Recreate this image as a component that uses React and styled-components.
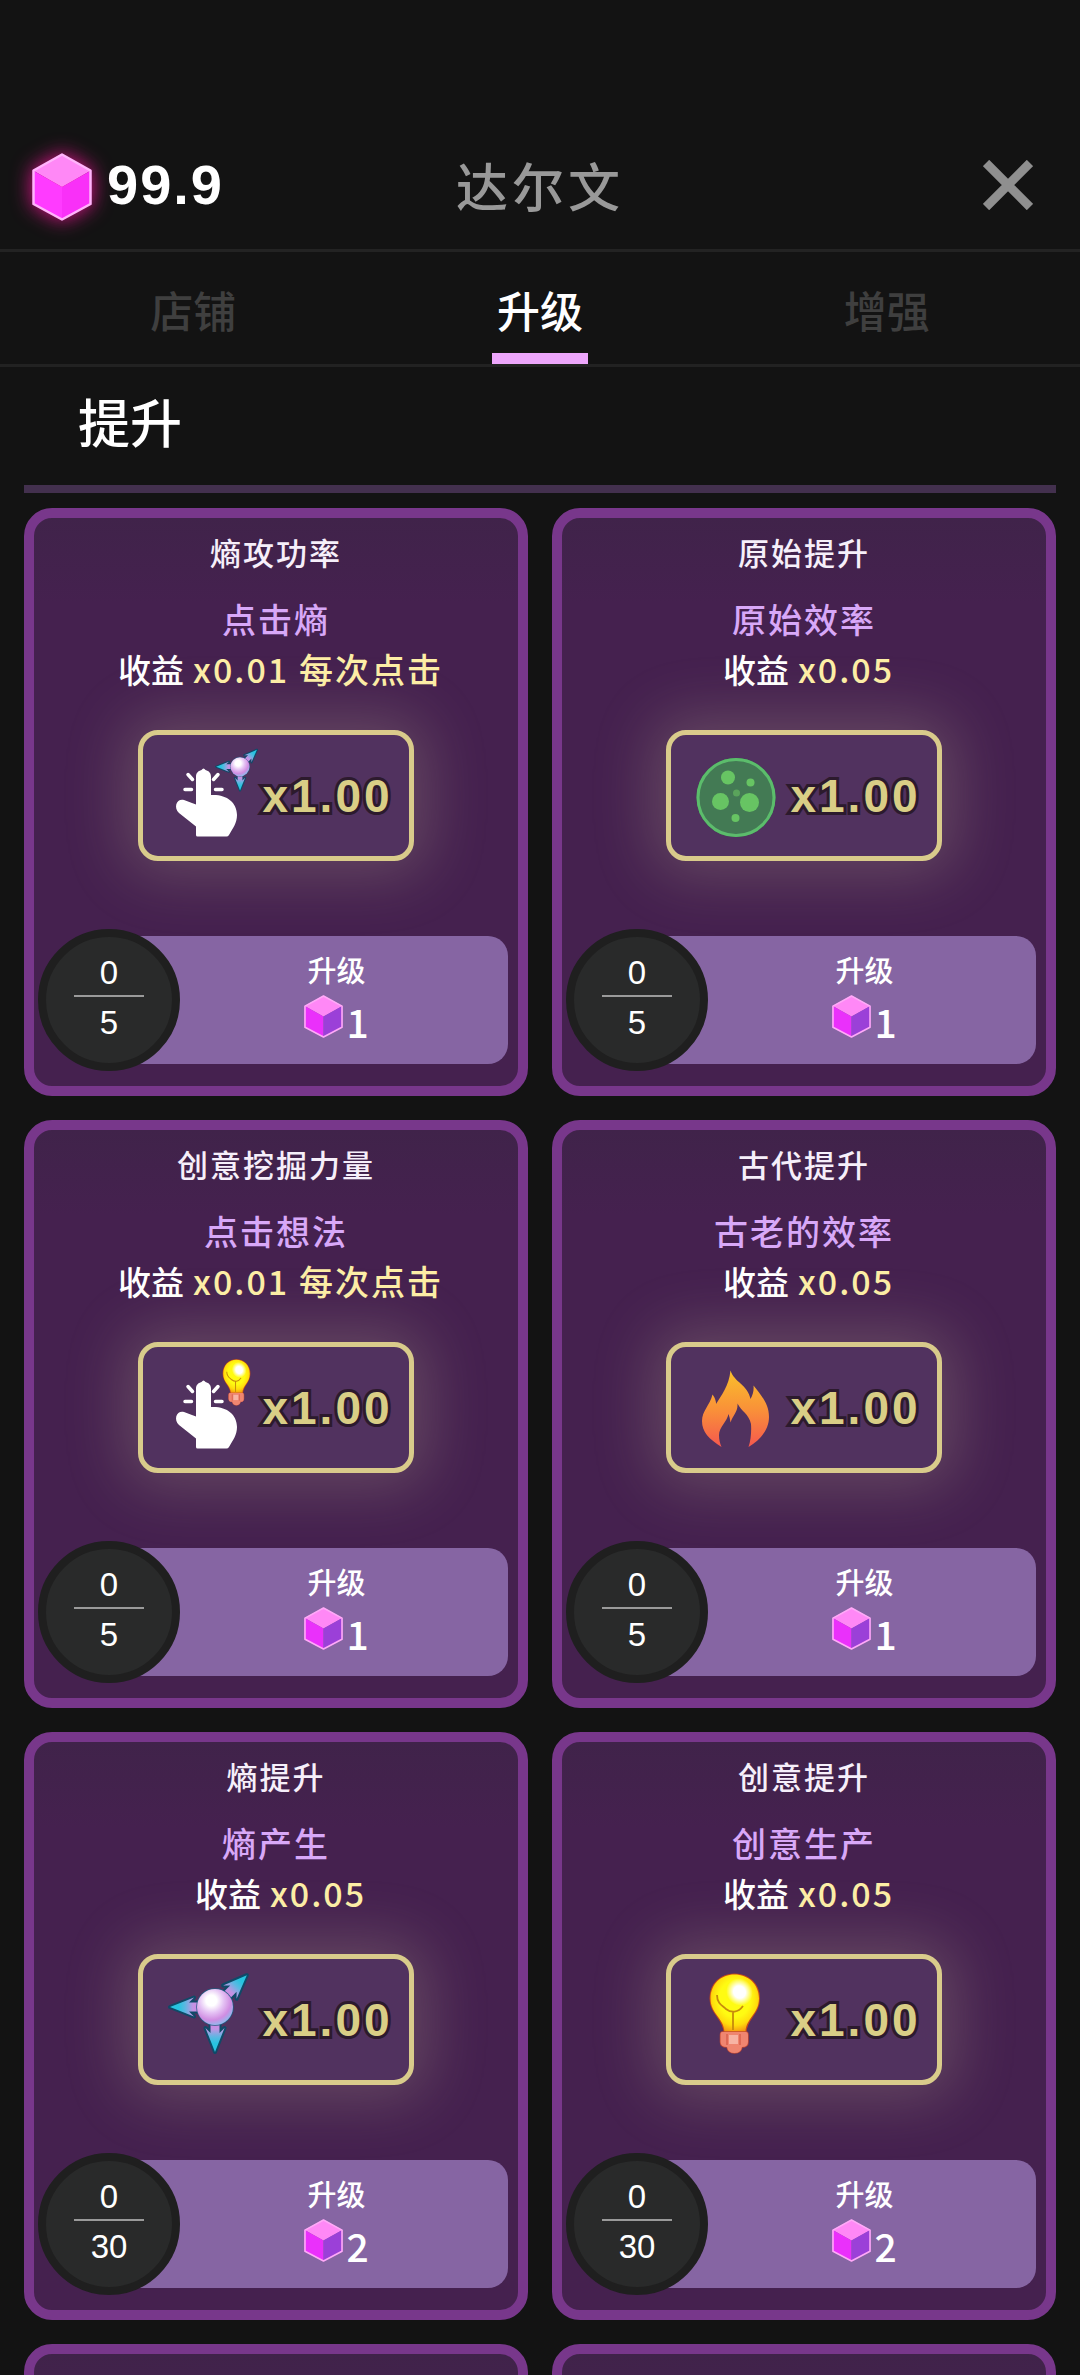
import React, { useState } from "react";
import styled, { createGlobalStyle } from "styled-components";

const GlobalStyle = createGlobalStyle`
	* {
		box-sizing: border-box;
	}
	body {
		margin: 0;
		background: #131313;
		color: white;
		font-family: "Noto Sans CJK SC", "Noto Sans", sans-serif;
		font-weight: 500;
	}
	h1, h2, h3, p {
		margin: 0;
		font-weight: 500;
	}
	button {
		border: none;
		padding: 0;
		background: none;
		color: inherit;
		font: inherit;
		cursor: pointer;
	}
`;

const numberFont = `"Liberation Sans", Arial, sans-serif`;

const Page = styled.div`
	height: 100vh;
	overflow: hidden;
	display: flex;
	flex-direction: column;
`;

const Header = styled.header`
	flex: none;
	display: grid;
	grid-template-columns: 1fr auto 1fr;
	align-items: center;
	padding: 121px 32px 0;
	height: 252px;
	border-bottom: 3px solid #232323;
	h1 {
		color: #999;
		font-size: 52px;
		line-height: 76px;
		letter-spacing: 4px;
	}
`;

const Balance = styled.div`
	display: flex;
	align-items: center;
	gap: 15px;
	font-family: ${numberFont};
	font-size: 56px;
	font-weight: 700;
	letter-spacing: 2px;
	line-height: 68px;
	svg {
		margin-top: 4px;
		filter: drop-shadow(0 0 10px #e0138c);
	}
`;

const CloseButton = styled.button`
	justify-self: end;
	display: flex;
	padding: 15px;
`;

const Tabs = styled.nav`
	flex: none;
	display: flex;
	padding: 0 20px;
	border-bottom: 3px solid #222;
`;

const Tab = styled.button`
	flex: 1;
	display: flex;
	flex-direction: column;
	align-items: center;
	padding-top: 13px;
	color: ${({ $active }) => ($active ? "white" : "#3f3f3f")};
	font-size: 43px;
	line-height: 88px;
	&::after {
		content: "";
		width: 96px;
		height: 11px;
		background: ${({ $active }) => ($active ? "#eda6fb" : "transparent")};
	}
`;

const Content = styled.main`
	flex: 1;
	min-height: 0;
	overflow: hidden;
	padding: 0 24px;
`;

const SectionTitle = styled.h2`
	padding: 16px 54px 26px;
	border-bottom: 8px solid #43304e;
	font-size: 52px;
	line-height: 76px;
`;

const Grid = styled.div`
	display: grid;
	grid-template-columns: 1fr 1fr;
	gap: 24px;
	padding: 15px 0 24px;
`;

const Card = styled.article`
	min-height: 588px;
	display: flex;
	flex-direction: column;
	align-items: center;
	padding: 12px 0 15px;
	border: 10px solid #78378b;
	border-radius: 28px;
	background: linear-gradient(#40234a, #45214f 15%, #45214f);
	h3 {
		color: #f6effa;
		font-size: 31px;
		line-height: 44px;
		letter-spacing: 2px;
	}
`;

const Target = styled.p`
	margin-top: 20px;
	color: #d8a8f8;
	font-size: 34px;
	line-height: 50px;
	letter-spacing: 2px;
`;

const Benefit = styled.p`
	font-size: 34px;
	line-height: 50px;
	letter-spacing: 2px;
	color: #fdeea6;
	span {
		margin: 0 9px;
		color: white;
		font-size: 33px;
		letter-spacing: 0;
	}
`;

const Multiplier = styled.div`
	display: flex;
	align-items: center;
	gap: 10px;
	height: 131px;
	margin-top: 36px;
	padding: 0 16px 0 21px;
	border: 5px solid #d9cb8b;
	border-radius: 20px;
	background: #51325f;
	box-shadow: 0 0 60px 14px rgba(205, 196, 160, 0.24);
	color: #d9ce86;
	font-family: ${numberFont};
	font-size: 46px;
	font-weight: 700;
	letter-spacing: 3px;
	-webkit-text-stroke: 6px #2c1a2d;
	paint-order: stroke fill;
	svg {
		overflow: visible;
	}
`;

const Footer = styled.div`
	align-self: stretch;
	display: flex;
	align-items: center;
	margin-top: auto;
	padding: 0 10px 0 4px;
`;

const Level = styled.div`
	position: relative;
	z-index: 1;
	flex: none;
	display: flex;
	flex-direction: column;
	align-items: center;
	width: 142px;
	height: 142px;
	padding-top: 14px;
	border: 8px solid #1f1f1f;
	border-radius: 50%;
	background: #292a2a;
	font-family: ${numberFont};
	font-size: 33px;
	font-weight: 400;
	line-height: 44px;
	span:first-child {
		width: 70px;
		border-bottom: 2px solid #9a9a9a;
		text-align: center;
	}
	span:last-child {
		padding-top: 4px;
	}
`;

const UpgradeButton = styled.button`
	flex: 1;
	display: flex;
	flex-direction: column;
	align-items: center;
	height: 128px;
	margin-left: -70px;
	padding: 11px 0 0 55px;
	border-radius: 20px;
	background: #8665a3;
	font-size: 29px;
	line-height: 44px;
`;

const Price = styled.span`
	display: flex;
	align-items: center;
	gap: 3px;
	font-size: 39px;
	line-height: 60px;
	svg {
		margin-bottom: 10px;
	}
`;

function Cube({ width, height, front, shade, edge }) {
	return (
		<svg width={width} height={height} viewBox='0 0 60 68' preserveAspectRatio='none' aria-hidden='true'>
			<path d='M30 1 59 17.500 30 34 1 17.500z' fill='#ff88f6' />
			<path d='M1 17.500 30 34V67L1 51z' fill={front} />
			<path d='M59 17.500 30 34V67L59 51z' fill={shade} />
			<path
				d='M30 1.500 58.500 17.500V51L30 66.500 1.500 51V17.500z'
				fill='none'
				stroke={edge}
				strokeWidth='2.500'
				strokeLinejoin='round'
			/>
		</svg>
	);
}

function Hand() {
	return (
		<g>
			<path
				d='M32 33C32 29 34 27 37.500 26Q39.500 23 41.500 26C45 27 47 29 47 33V51C62 50 73 58 73 71C73 79 69 84 65 91Q64 92.500 62.500 92.500H33.500Q32 92.500 32 91V82.500L15 69C9 63 13 54 20 56L32 60.500Z'
				fill='white'
			/>
			<path
				d='M21 45.500H27.500M24 30.500 28.500 35.500M54 30.500 49.500 35.500M51.500 45.500H58'
				stroke='white'
				strokeWidth='3.500'
				strokeLinecap='round'
			/>
		</g>
	);
}

function Bulb() {
	return (
		<g>
			<defs>
				<radialGradient id='bulbGlass' cx='0.5' cy='0.42' r='0.58'>
					<stop offset='0.55' stopColor='#fffb12' />
					<stop offset='0.8' stopColor='#ffdc0c' />
					<stop offset='1' stopColor='#f59a12' />
				</radialGradient>
				<radialGradient id='bulbShine'>
					<stop offset='0.45' stopColor='white' />
					<stop offset='1' stopColor='white' stopOpacity='0' />
				</radialGradient>
			</defs>
			<path
				d='M32.500 64C32 50 18.500 46 18.500 30.500C18.500 16 29 6.500 42.500 6.500S67 16 67 30.500C67 46 54 50 53.500 64Z'
				fill='url(#bulbGlass)'
				stroke='#c94a17'
				strokeWidth='2'
			/>
			<ellipse cx='47.500' cy='24' rx='13' ry='14' fill='url(#bulbShine)' transform='rotate(-35 47.500 24)' />
			<path
				d='M25 27C25 36 31 38 34 41C39 45 46 45 51 38M41 44V62'
				fill='none'
				stroke='#c78b0c'
				strokeWidth='1.800'
			/>
			<path
				d='M30 64H54Q56 64 56 67V74Q56 79 50 79Q49 85 42.500 85T35 79Q28.500 79 28.500 74V67Q28.500 64 30 64Z'
				fill='#ef8570'
				stroke='#c24832'
				strokeWidth='1.500'
			/>
			<path d='M35 66V77M48 66V77' stroke='#d9604c' strokeWidth='1.500' />
			<path d='M37 67H46V76H37z' fill='#f7b3a4' />
		</g>
	);
}

const arrow = "M-4.500 12V26L-9.500 21L0 45L9.500 21L4.500 26V12Z";

function Particle() {
	return (
		<g>
			<defs>
				<linearGradient id='arrowFill' gradientUnits='userSpaceOnUse' x1='0' y1='14' x2='0' y2='46'>
					<stop offset='0' stopColor='#d67fe2' />
					<stop offset='0.25' stopColor='#c294e4' />
					<stop offset='0.5' stopColor='#5cb8e2' />
					<stop offset='0.7' stopColor='#27c4e0' />
				</linearGradient>
				<radialGradient id='ballFill' cx='0.4' cy='0.32' r='0.68'>
					<stop offset='0.22' stopColor='white' />
					<stop offset='0.5' stopColor='#e5c3f4' />
					<stop offset='0.8' stopColor='#d08de2' />
					<stop offset='1' stopColor='#9ab3ec' />
				</radialGradient>
			</defs>
			{[0, 90, 225].map((angle) => (
				<path
					key={angle}
					d={arrow}
					transform={`translate(51 39) rotate(${angle})`}
					fill='url(#arrowFill)'
					stroke='#0f4a68'
					strokeWidth='4'
					paintOrder='stroke'
					strokeLinejoin='round'
				/>
			))}
			<circle cx='51' cy='39' r='18' fill='url(#ballFill)' stroke='#205d82' strokeWidth='1.500' />
		</g>
	);
}

function Microbe() {
	return (
		<g>
			<circle cx='44' cy='53.500' r='37' fill='#437a54' stroke='#2f9646' strokeWidth='5' />
			<circle cx='44' cy='53.500' r='38' fill='none' stroke='#5cbc6c' strokeWidth='3' />
			<g fill='#67c463'>
				<circle cx='36' cy='33.500' r='7' />
				<circle cx='58.500' cy='38.500' r='4' />
				<circle cx='28.500' cy='57.500' r='8.500' />
				<circle cx='57.500' cy='58.500' r='9.500' />
				<circle cx='43.500' cy='74' r='4' />
			</g>
			<circle cx='44.500' cy='49' r='3.500' fill='#5aa45b' />
		</g>
	);
}

function Flame() {
	return (
		<g>
			<defs>
				<linearGradient id='flameFill' x1='0' y1='0' x2='0' y2='1'>
					<stop offset='0' stopColor='#fac02b' />
					<stop offset='0.5' stopColor='#f99238' />
					<stop offset='1' stopColor='#f5584e' />
				</linearGradient>
			</defs>
			<path
				d='M38.500 14.500C42 26 56 29 58.500 43C61 39 62 34 61.500 29.500C68 38 77 47 77 61C77 74 68 84 56.500 91C59 84 59.500 75 59 68C57 58 49 55 45.500 47.500C46 56 41 59 38.500 66.500Q38 62 36.500 58C35 66 27 71 27 79C27 84 28 87 29.500 91C17 83 10 76 10 65C10 55 18 49 20.500 38.500Q24 43 24 48C29 40 37 30 38.500 14.500Z'
				fill='url(#flameFill)'
			/>
		</g>
	);
}

const icons = {
	tapParticle: (
		<>
			<Hand />
			<g transform='translate(49 2) scale(0.53)'>
				<Particle />
			</g>
		</>
	),
	tapBulb: (
		<>
			<Hand />
			<g transform='translate(49 0) scale(0.55 0.58)'>
				<Bulb />
			</g>
		</>
	),
	microbe: <Microbe />,
	flame: <Flame />,
	particle: <Particle />,
	bulb: <Bulb />,
};

const tabs = ["店铺", "升级", "增强"];

const upgrades = [
	{ title: "熵攻功率", target: "点击熵", bonus: "x0.01 每次点击", icon: "tapParticle", max: 5, price: 1 },
	{ title: "原始提升", target: "原始效率", bonus: "x0.05", icon: "microbe", max: 5, price: 1 },
	{ title: "创意挖掘力量", target: "点击想法", bonus: "x0.01 每次点击", icon: "tapBulb", max: 5, price: 1 },
	{ title: "古代提升", target: "古老的效率", bonus: "x0.05", icon: "flame", max: 5, price: 1 },
	{ title: "熵提升", target: "熵产生", bonus: "x0.05", icon: "particle", max: 30, price: 2 },
	{ title: "创意提升", target: "创意生产", bonus: "x0.05", icon: "bulb", max: 30, price: 2 },
];

function UpgradeCard({ title, target, bonus, icon, max, price }) {
	return (
		<Card>
			<h3>{title}</h3>
			<Target>{target}</Target>
			<Benefit>
				<span>收益</span>
				{bonus}
			</Benefit>
			<Multiplier>
				<svg width='88' height='104' viewBox='0 0 88 104' aria-hidden='true'>
					{icons[icon]}
				</svg>
				x1.00
			</Multiplier>
			<Footer>
				<Level>
					<span>0</span>
					<span>{max}</span>
				</Level>
				<UpgradeButton>
					升级
					<Price>
						<Cube width={39} height={43} front='#ea30fb' shade='#9b40d8' edge='#ffa9f8' />
						{price}
					</Price>
				</UpgradeButton>
			</Footer>
		</Card>
	);
}

export default function App() {
	const [tab, setTab] = useState("升级");
	return (
		<Page>
			<GlobalStyle />
			<Header>
				<Balance>
					<Cube width={60} height={68} front='#ff3bff' shade='#f930f8' edge='#ffb4fb' />
					99.9
				</Balance>
				<h1>达尔文</h1>
				<CloseButton aria-label='关闭'>
					<svg width='50' height='50' viewBox='0 0 50 50' aria-hidden='true'>
						<path d='M3 3 47 47M47 3 3 47' stroke='#8f8f8f' strokeWidth='9' />
					</svg>
				</CloseButton>
			</Header>
			<Tabs>
				{tabs.map((name) => (
					<Tab key={name} $active={name === tab} onClick={() => setTab(name)}>
						{name}
					</Tab>
				))}
			</Tabs>
			<Content>
				<SectionTitle>提升</SectionTitle>
				<Grid>
					{upgrades.map((upgrade) => (
						<UpgradeCard key={upgrade.title} {...upgrade} />
					))}
					<Card />
					<Card />
				</Grid>
			</Content>
		</Page>
	);
}
